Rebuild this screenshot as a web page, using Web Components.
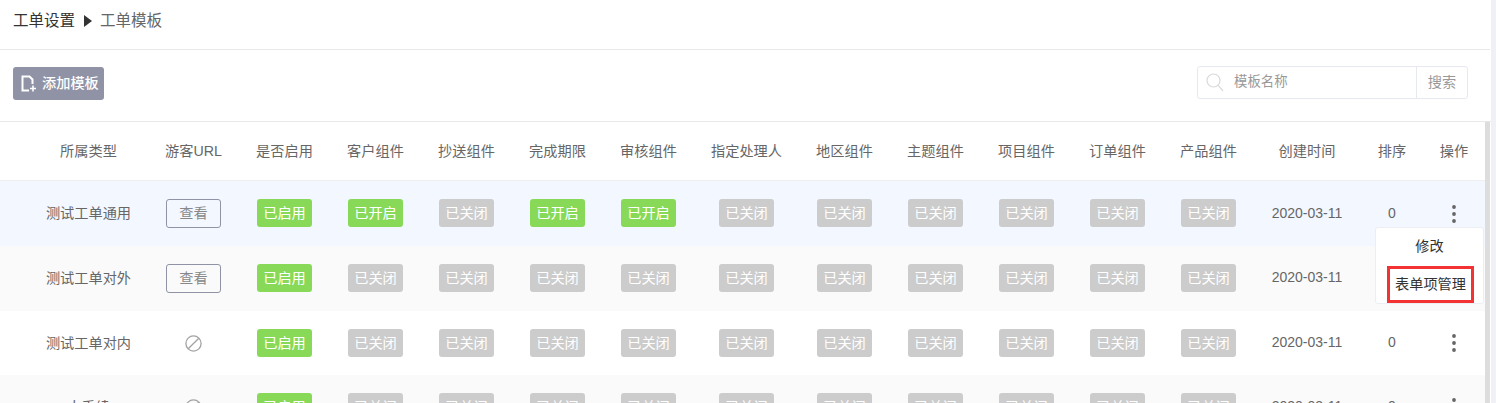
<!DOCTYPE html>
<html lang="zh-CN">
<head>
<meta charset="utf-8">
<title>工单模板</title>
<style>
    html, body { margin: 0; height: 100%; overflow: hidden; }
    body {
        background: #f0f1f7;
        color: #666;
        font: 14.2px/1.4 "Liberation Sans", "Noto Sans CJK SC", sans-serif;
    }
</style>
</head>
<body>
<template-page></template-page>

<script>
const COLUMNS = '148px 91px 91px 91px 91px 91px 91px 105px 91px 91px 91px 91px 91px 106px 64px 60px';

class CrumbBar extends HTMLElement {
    constructor() {
        super();
        this.shadow = this.attachShadow({ mode: 'open' });
    }

    connectedCallback() {
        this.shadow.innerHTML = /*html*/`
            <style>
                :host {
                    display: flex;
                    align-items: center;
                    height: 42px;
                    padding: 0 0 7px 13px;
                    border-bottom: 1px solid #e8e8e8;
                    margin-right: 1px;
                    font-size: 15.5px;
                    color: #666;
                }
                .root { color: #333; }
                svg { margin: 0 8px 0 9px; }
            </style>
            <span class="root">工单设置</span>
            <svg width="8" height="12" viewBox="0 0 8 12"><path d="M0 0L8 6L0 12Z" fill="#333"/></svg>
            <span>工单模板</span>
        `;
    }
}

class AddButton extends HTMLElement {
    constructor() {
        super();
        this.shadow = this.attachShadow({ mode: 'open' });
    }

    connectedCallback() {
        this.shadow.innerHTML = /*html*/`
            <style>
                :host {
                    display: flex;
                    align-items: center;
                    gap: 6px;
                    box-sizing: border-box;
                    width: 91px;
                    height: 33px;
                    margin-top: 1px;
                    padding-left: 8px;
                    border-radius: 3px;
                    background: #8f93a5;
                    color: #fff;
                    font-weight: 500;
                }
            </style>
            <svg width="15" height="17" viewBox="0 0 15 17" fill="none" stroke="#fff" stroke-width="2">
                <path d="M8 15.5H1.5V1.5H8.5L11.5 4.5V9"/>
                <path d="M9 13.5H15M12 10.5V16.5" stroke-width="1.6"/>
            </svg>
            <slot></slot>
        `;
    }
}

class SearchBox extends HTMLElement {
    constructor() {
        super();
        this.shadow = this.attachShadow({ mode: 'open' });
    }

    connectedCallback() {
        this.shadow.innerHTML = /*html*/`
            <style>
                :host {
                    display: flex;
                    box-sizing: border-box;
                    width: 271px;
                    height: 33px;
                    border: 1px solid #e6e9f0;
                    border-radius: 3px;
                    color: #999;
                }
                .field {
                    flex: 1;
                    display: flex;
                    align-items: center;
                    gap: 10px;
                    padding-left: 8px;
                    font-size: 13.4px;
                }
                .go {
                    width: 50px;
                    display: flex;
                    align-items: center;
                    justify-content: center;
                    border-left: 1px solid #e6e9f0;
                }
            </style>
            <div class="field">
                <svg width="18" height="19" viewBox="0 0 18 19" fill="none" stroke="#d9d9d9" stroke-width="1.2">
                    <circle cx="7.5" cy="7.5" r="6.5"/>
                    <path d="M12.2 12.4L17 18"/>
                </svg>
                <span>模板名称</span>
            </div>
            <div class="go">搜索</div>
        `;
    }
}

class ToolBar extends HTMLElement {
    constructor() {
        super();
        this.shadow = this.attachShadow({ mode: 'open' });
    }

    connectedCallback() {
        this.shadow.innerHTML = /*html*/`
            <style>
                :host {
                    display: flex;
                    justify-content: space-between;
                    align-items: flex-start;
                    box-sizing: border-box;
                    height: 71px;
                    padding: 16px 23px 0 13px;
                }
            </style>
            <add-button>添加模板</add-button>
            <search-box></search-box>
        `;
    }
}

class StatusBadge extends HTMLElement {
    constructor() {
        super();
        this.shadow = this.attachShadow({ mode: 'open' });
    }

    connectedCallback() {
        this.shadow.innerHTML = /*html*/`
            <style>
                :host {
                    display: flex;
                    align-items: center;
                    justify-content: center;
                    box-sizing: border-box;
                    width: 55px;
                    height: 28px;
                    padding-top: 2px;
                    border-radius: 3px;
                    background: #ccc;
                    color: #fff;
                }
                :host([on]) { background: #87d957; }
            </style>
            <slot></slot>
        `;
    }
}

class ViewButton extends HTMLElement {
    constructor() {
        super();
        this.shadow = this.attachShadow({ mode: 'open' });
    }

    connectedCallback() {
        this.shadow.innerHTML = /*html*/`
            <style>
                :host {
                    display: flex;
                    align-items: center;
                    justify-content: center;
                    box-sizing: border-box;
                    width: 55px;
                    height: 29px;
                    padding-top: 2px;
                    border: 1px solid #8f93a5;
                    border-radius: 3px;
                    color: #888;
                }
            </style>
            <slot></slot>
        `;
    }
}

class TableRow extends HTMLElement {
    constructor() {
        super();
        this.shadow = this.attachShadow({ mode: 'open' });
    }

    connectedCallback() {
        this.shadow.innerHTML = /*html*/`
            <style>
                :host {
                    display: grid;
                    grid-template-columns: ${COLUMNS};
                    align-items: center;
                    justify-items: center;
                    height: 64.75px;
                    background: #fff;
                }
                :host([head]) { height: 58px; border-bottom: 1px solid #eee; }
                :host([tone="hover"]) { background: #f3f7ff; }
                :host([tone="grey"]) { background: #fafafa; }
                :host([tone="plain"]) { height: 64px; }
                ::slotted(:first-child) { padding-left: 29px; }
                ::slotted(span) { padding-top: 2px; }
                ::slotted(.date) { padding-top: 0; font-size: 14px; white-space: nowrap; }
                ::slotted(.dots) { margin-top: 1px; }
                ::slotted(.ban) { margin-top: 1px; }
            </style>
            <slot></slot>
        `;
    }
}

class RowMenu extends HTMLElement {
    constructor() {
        super();
        this.shadow = this.attachShadow({ mode: 'open' });
    }

    connectedCallback() {
        this.shadow.innerHTML = /*html*/`
            <style>
                :host {
                    position: absolute;
                    top: 105px;
                    right: 7px;
                    display: flex;
                    flex-direction: column;
                    align-items: center;
                    box-sizing: border-box;
                    width: 109px;
                    height: 77px;
                    padding-top: 1px;
                    border: 1px solid #eceef3;
                    border-radius: 3px;
                    background: #fff;
                    color: #333;
                }
                .item {
                    display: flex;
                    align-items: center;
                    justify-content: center;
                    height: 36px;
                }
                .picked {
                    box-sizing: border-box;
                    width: 87px;
                    height: 37px;
                    margin: 1px 0 0 2px;
                    border: 3px solid #f33333;
                    white-space: nowrap;
                }
            </style>
            <div class="item">修改</div>
            <div class="item picked">表单项管理</div>
        `;
    }
}

class TemplateTable extends HTMLElement {
    constructor() {
        super();
        this.shadow = this.attachShadow({ mode: 'open' });
    }

    connectedCallback() {
        const heads = ['所属类型', '游客URL', '是否启用', '客户组件', '抄送组件', '完成期限', '审核组件', '指定处理人',
            '地区组件', '主题组件', '项目组件', '订单组件', '产品组件', '创建时间', '排序', '操作'];
        // row 2's sort number sits under the open menu, so it stays empty
        const rows = [
            { name: '测试工单通用', url: true, tone: 'hover', open: [0, 2, 3], sort: '0' },
            { name: '测试工单对外', url: true, tone: 'grey', open: [], sort: '' },
            { name: '测试工单对内', url: false, tone: 'plain', open: [], sort: '0' },
            { name: '人手续', url: false, tone: 'grey', open: [], sort: '0' },
        ];
        const ban = `<svg class="ban" width="17" height="17" viewBox="0 0 17 17" fill="none" stroke="#a3a3a3" stroke-width="1.3">
            <circle cx="8.5" cy="8.5" r="7.6"/><path d="M3.2 13.8L13.8 3.2"/></svg>`;
        const dots = `<svg class="dots" width="4" height="18" viewBox="0 0 4 18" fill="#666">
            <circle cx="2" cy="2" r="1.9"/><circle cx="2" cy="9" r="1.9"/><circle cx="2" cy="16" r="1.9"/></svg>`;

        const body = rows.map(row => {
            const badges = Array.from({ length: 10 }, (_, i) => {
                const on = row.open.includes(i);
                return `<status-badge ${on ? 'on' : ''}>${on ? '已开启' : '已关闭'}</status-badge>`;
            }).join('');
            return `<table-row tone="${row.tone}">
                <span>${row.name}</span>
                ${row.url ? '<view-button>查看</view-button>' : ban}
                <status-badge on>已启用</status-badge>
                ${badges}
                <span class="date">2020-03-11</span>
                <span class="date">${row.sort}</span>
                ${dots}
            </table-row>`;
        }).join('');

        this.shadow.innerHTML = /*html*/`
            <style>
                :host {
                    position: relative;
                    display: flex;
                    border-top: 1px solid #e8e8e8;
                    padding-right: 1px;
                }
                .rows { width: 1485px; }
                .bar { width: 5px; background: #ddd; }
            </style>
            <div class="rows">
                <table-row head>${heads.map(h => `<span>${h}</span>`).join('')}</table-row>
                ${body}
            </div>
            <div class="bar"></div>
            <row-menu></row-menu>
        `;
    }
}

class TemplatePage extends HTMLElement {
    constructor() {
        super();
        this.shadow = this.attachShadow({ mode: 'open' });
    }

    connectedCallback() {
        this.shadow.innerHTML = /*html*/`
            <style>
                :host {
                    display: block;
                    width: 1491px;
                    height: 403px;
                    overflow: hidden;
                    background: #fff;
                }
            </style>
            <crumb-bar></crumb-bar>
            <tool-bar></tool-bar>
            <template-table></template-table>
        `;
    }
}

customElements.define('crumb-bar', CrumbBar);
customElements.define('add-button', AddButton);
customElements.define('search-box', SearchBox);
customElements.define('tool-bar', ToolBar);
customElements.define('status-badge', StatusBadge);
customElements.define('view-button', ViewButton);
customElements.define('table-row', TableRow);
customElements.define('row-menu', RowMenu);
customElements.define('template-table', TemplateTable);
customElements.define('template-page', TemplatePage);
</script>
</body>
</html>
